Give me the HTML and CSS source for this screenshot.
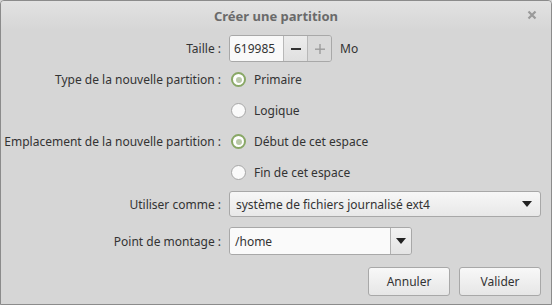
FILE: index.html
```html
<!DOCTYPE html>
<html lang="fr">
<head>
  <meta charset="UTF-8" />
  <title>Créer une partition</title>
  <link rel="stylesheet" href="styles.css">
</head>
<body>

<div class="dialog">
  <!-- Title bar -->
  <div class="titlebar">
    <span class="title">Créer une partition</span>
    <svg class="close" width="10" height="10" viewBox="0 0 10 10">
      <path d="M1.5 1.5 L8.5 8.5 M8.5 1.5 L1.5 8.5" stroke="#9a9a9a" stroke-width="2.2" />
    </svg>
  </div>

  <!-- Form -->
  <div class="form">
    <div class="label row-size">Taille :</div>
    <div class="value row-size">
      <div class="spin">
        <span class="spin-entry">619985</span>
        <span class="spin-btn minus">
          <svg width="10" height="10" viewBox="0 0 10 10"><rect x="0" y="4" width="10" height="2" fill="#333" /></svg>
        </span>
        <span class="spin-btn plus disabled">
          <svg width="10" height="10" viewBox="0 0 10 10"><rect x="0" y="4.5" width="10" height="1.4" fill="#9c9c9c" /><rect x="4.3" y="0" width="1.4" height="10" fill="#9c9c9c" /></svg>
        </span>
      </div>
      <span class="unit">Mo</span>
    </div>

    <div class="label row-radio">Type de la nouvelle partition :</div>
    <div class="value row-radio"><span class="radio checked"></span>Primaire</div>
    <div class="label row-radio"></div>
    <div class="value row-radio"><span class="radio"></span>Logique</div>

    <div class="label row-radio">Emplacement de la nouvelle partition :</div>
    <div class="value row-radio"><span class="radio checked"></span>Début de cet espace</div>
    <div class="label row-radio"></div>
    <div class="value row-radio"><span class="radio"></span>Fin de cet espace</div>

    <div class="label row-combo">Utiliser comme :</div>
    <div class="value row-combo">
      <div class="combo">
        <span>système de fichiers journalisé ext4</span>
        <span class="arrow"></span>
      </div>
    </div>

    <div class="label row-mount">Point de montage :</div>
    <div class="value row-mount">
      <div class="combo-entry">
        <span class="entry-text">/home</span>
        <span class="entry-btn"><span class="arrow"></span></span>
      </div>
    </div>
  </div>

  <!-- Buttons -->
  <div class="actions">
    <button class="btn">Annuler</button>
    <button class="btn">Valider</button>
  </div>
</div>

</body>
</html>
```

FILE: styles.css
```css
* { margin: 0; padding: 0; box-sizing: border-box; }

body {
  font-family: 'Noto Sans', 'Open Sans', sans-serif;
  font-size: 12px;
  color: #333;
  background: #d6d6d6;
}

.dialog {
  width: 552px;
  height: 305px;
  background: #d6d6d6;
  border: 1px solid #8b8b8b;
  border-radius: 4px 4px 0 0;
  overflow: hidden;
}

.titlebar {
  height: 29px;
  position: relative;
  display: flex;
  justify-content: center;
  align-items: center;
  background: linear-gradient(#e2e2e2, #d6d6d6);
}

.title {
  font-weight: bold;
  font-size: 13px;
  color: #6a6a6a;
}

.close {
  position: absolute;
  right: 14px;
  top: 9px;
}

.form {
  display: grid;
  grid-template-columns: 220px 1fr;
  column-gap: 8px;
  padding-top: 5px;
  padding-right: 10px;
}

.label {
  display: flex;
  align-items: center;
  justify-content: flex-end;
  white-space: nowrap;
}

.value {
  display: flex;
  align-items: center;
}

.row-size { height: 27px; }
.row-radio { height: 31px; }
.row-radio:nth-child(3), .row-radio:nth-child(4) { margin-top: 2px; }
.row-combo { height: 26px; margin-top: 3px; }
.row-mount { height: 28px; margin-top: 10px; }

/* spin button */
.spin {
  display: flex;
  height: 27px;
  border: 1px solid #a8a8a8;
  border-radius: 3px;
  overflow: hidden;
}

.spin-entry {
  background: #f9f9f9;
  padding: 0 4px;
  display: flex;
  align-items: center;
  width: 53px;
}

.spin-btn {
  width: 24px;
  display: flex;
  align-items: center;
  justify-content: center;
  border-left: 1px solid #b8b8b8;
  background: linear-gradient(#ececec, #e0e0e0);
}

.spin-btn.disabled {
  background: #d9d9d9;
}

.unit {
  margin-left: 8px;
}

/* radio buttons */
.radio {
  width: 15px;
  height: 15px;
  border-radius: 50%;
  border: 1px solid #a6a6a6;
  background: #fafafa;
  margin-left: 2px;
  margin-right: 8px;
  position: relative;
}

.radio.checked {
  border: 2px solid #89a866;
  background: #fff;
}

.radio.checked::after {
  content: "";
  position: absolute;
  left: 2.5px;
  top: 2.5px;
  width: 6px;
  height: 6px;
  border-radius: 50%;
  background: #b9c8a8;
}

/* combo box */
.combo {
  width: 312px;
  height: 26px;
  display: flex;
  align-items: center;
  justify-content: space-between;
  padding: 0 8px 0 6px;
  border: 1px solid #a8a8a8;
  border-radius: 3px;
  background: linear-gradient(#f7f7f7, #e8e8e8);
}

.arrow {
  width: 0;
  height: 0;
  border-left: 5px solid transparent;
  border-right: 5px solid transparent;
  border-top: 6px solid #222;
}

.combo-entry {
  width: 183px;
  height: 28px;
  display: flex;
  border: 1px solid #a8a8a8;
  border-radius: 3px;
  overflow: hidden;
}

.entry-text {
  flex: 1;
  background: #fafafa;
  padding: 0 5px;
  display: flex;
  align-items: center;
}

.entry-btn {
  width: 21px;
  display: flex;
  align-items: center;
  justify-content: center;
  border-left: 1px solid #b0b0b0;
  background: linear-gradient(#f2f2f2, #e4e4e4);
}

/* dialog buttons */
.actions {
  display: flex;
  justify-content: flex-end;
  gap: 9px;
  padding: 12px 10px 0 0;
}

.btn {
  width: 82px;
  height: 29px;
  font-family: inherit;
  font-size: 12px;
  color: #333;
  border: 1px solid #a8a8a8;
  border-radius: 3px;
  background: linear-gradient(#f8f8f8, #e6e6e6);
}
```
